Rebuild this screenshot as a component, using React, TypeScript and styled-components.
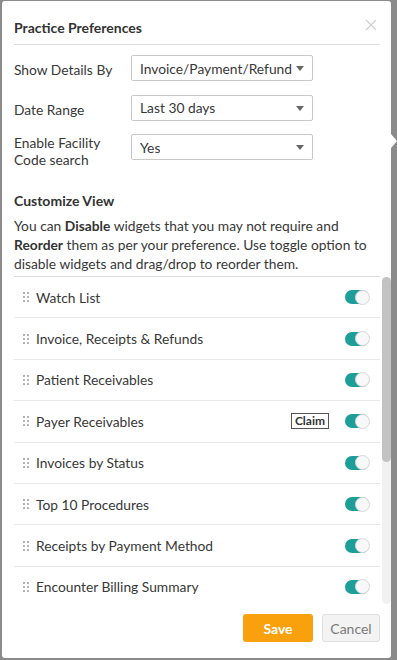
import React from 'react';
import styled, { createGlobalStyle } from 'styled-components';

const widgets = [
  { name: 'Watch List' },
  { name: 'Invoice, Receipts & Refunds' },
  { name: 'Patient Receivables' },
  { name: 'Payer Receivables', badge: 'Claim' },
  { name: 'Invoices by Status' },
  { name: 'Top 10 Procedures' },
  { name: 'Receipts by Payment Method' },
  { name: 'Encounter Billing Summary' },
  { name: 'Claim Status Summary' },
  { name: 'Payments by Payer' },
  { name: 'Adjustments & Write-offs' },
  { name: 'Daily Collections' },
  { name: 'Charges by Provider' },
  { name: 'Aging Summary' },
];

const DragHandle = () => (
  <svg width="6" height="10" viewBox="0 0 6 10">
    {[1, 5].map((x) =>
      [1, 5, 9].map((y) => <circle key={`${x}-${y}`} cx={x} cy={y} r="1.1" fill="#a8a8a8" />)
    )}
  </svg>
);

export default function App() {
  return (
    <>
      <GlobalStyle />
      <Popover>
        <Header>
          <Title>Practice Preferences</Title>
          <CloseButton aria-label="close">
            <svg width="12" height="12" viewBox="0 0 12 12">
              <path d="M1 1 L11 11 M11 1 L1 11" stroke="#cfcfcf" strokeWidth="1.2" />
            </svg>
          </CloseButton>
        </Header>

        <Form>
          <Label>Show Details By</Label>
          <Select>
            <SelectText>Invoice/Payment/Refund Date</SelectText>
            <Caret />
          </Select>
          <Label>Date Range</Label>
          <Select>
            <SelectText>Last 30 days</SelectText>
            <Caret />
          </Select>
          <Label $multi>
            Enable Facility
            <br />
            Code search
          </Label>
          <Select>
            <SelectText>Yes</SelectText>
            <Caret />
          </Select>
        </Form>

        <SectionTitle>Customize View</SectionTitle>
        <Description>
          You can <b>Disable</b> widgets that you may not require and <b>Reorder</b> them as per your
          preference. Use toggle option to disable widgets and drag/drop to reorder them.
        </Description>

        <ListRule />
        <ListArea>
          <ListScroll>
            {widgets.map((w) => (
              <WidgetRow key={w.name}>
                <DragHandle />
                <WidgetName>{w.name}</WidgetName>
                {w.badge && <Badge>{w.badge}</Badge>}
                <Toggle>
                  <Knob />
                </Toggle>
              </WidgetRow>
            ))}
          </ListScroll>
          <ScrollTrack>
            <ScrollThumb />
          </ScrollTrack>
        </ListArea>

        <Footer>
          <SaveButton>Save</SaveButton>
          <CancelButton>Cancel</CancelButton>
        </Footer>
      </Popover>
    </>
  );
}

const GlobalStyle = createGlobalStyle`
  html, body {
    margin: 0;
    background: #8b8b8b;
    font-family: Lato, "Open Sans", Arial, sans-serif;
    color: #333;
  }
  * { box-sizing: border-box; }
`;

const Popover = styled.div`
  position: relative;
  width: 389px;
  height: 657px;
  margin: 1px 0 0 2px;
  padding: 0 11px 0 12px;
  background: #fff;
  border-radius: 3px;
  display: flex;
  flex-direction: column;

  &::after {
    content: '';
    position: absolute;
    right: -6px;
    top: 133px;
    border-top: 7px solid transparent;
    border-bottom: 7px solid transparent;
    border-left: 6px solid #fff;
  }
`;

const Header = styled.div`
  display: flex;
  align-items: center;
  justify-content: space-between;
  padding: 17px 3px 6px 0;
  border-bottom: 1px solid #dcdcdc;
`;

const Title = styled.div`
  font-size: 14px;
  font-weight: 700;
  line-height: 20px;
  color: #333;
`;

const CloseButton = styled.div`
  display: flex;
  margin-top: -6px;
`;

const Form = styled.div`
  display: grid;
  grid-template-columns: 117px 182px;
  row-gap: 13.5px;
  margin-top: 10px;
  align-items: start;
`;

const Label = styled.div<{ $multi?: boolean }>`
  font-size: 13.8px;
  line-height: 17px;
  padding-top: ${(p) => (p.$multi ? '0' : '6px')};
  color: #383838;
`;

const Select = styled.div`
  position: relative;
  height: 26px;
  border: 1px solid #c9c9c9;
  border-radius: 2px;
  display: flex;
  align-items: center;
  padding: 0 17px 0 8px;
  overflow: hidden;
`;

const SelectText = styled.span`
  font-size: 13.8px;
  white-space: nowrap;
  overflow: hidden;
  color: #383838;
`;

const Caret = styled.span`
  position: absolute;
  right: 8px;
  top: 10px;
  border-left: 4px solid transparent;
  border-right: 4px solid transparent;
  border-top: 5px solid #666;
`;

const SectionTitle = styled.div`
  margin-top: 24px;
  font-size: 14px;
  font-weight: 700;
  line-height: 18px;
`;

const Description = styled.p`
  margin: 6px 0 0;
  font-size: 13.8px;
  line-height: 19px;
  color: #383838;

  b {
    font-weight: 700;
    color: #333;
  }
`;

const ListRule = styled.div`
  margin-top: 3px;
  border-top: 1px solid #dcdcdc;
`;

const ListArea = styled.div`
  display: flex;
  height: 327px;
  margin-right: -11px;
`;

const ListScroll = styled.div`
  flex: 1;
  overflow: hidden;
  margin-right: 2px;
`;

const ScrollTrack = styled.div`
  width: 9px;
  background: #f1f1f1;
  border-radius: 5px;
`;

const ScrollThumb = styled.div`
  height: 185px;
  background: #c2c2c2;
  border-radius: 5px;
`;

const WidgetRow = styled.div`
  display: flex;
  align-items: center;
  height: 41.4px;
  padding: 0 11px 0 9px;
  border-bottom: 1px solid #e8e8e8;
`;

const WidgetName = styled.span`
  flex: 1;
  margin-left: 7px;
  font-size: 13.8px;
  color: #383838;
`;

const Badge = styled.span`
  margin-right: 16px;
  padding: 0 3px;
  height: 16px;
  line-height: 14px;
  border: 1px solid #555;
  font-size: 12px;
  font-weight: 700;
  color: #333;
`;

const Toggle = styled.span`
  position: relative;
  width: 24px;
  height: 14px;
  border-radius: 7px;
  background: #1d9e99;
`;

const Knob = styled.span`
  position: absolute;
  right: -1px;
  top: -0.5px;
  width: 15px;
  height: 15px;
  border-radius: 50%;
  background: #f8f8f8;
  border: 1px solid #d8d8d8;
`;

const Footer = styled.div`
  display: flex;
  justify-content: flex-end;
  gap: 9px;
  margin-top: 10px;
`;

const SaveButton = styled.button`
  width: 70px;
  height: 28px;
  border: none;
  border-radius: 3px;
  background: #f9a00d;
  color: #fff;
  font-family: inherit;
  font-size: 14px;
  font-weight: 700;
`;

const CancelButton = styled.button`
  width: 58px;
  height: 28px;
  border: 1px solid #dedede;
  border-radius: 3px;
  background: #f3f3f3;
  color: #7a7a7a;
  font-family: inherit;
  font-size: 14px;
`;
